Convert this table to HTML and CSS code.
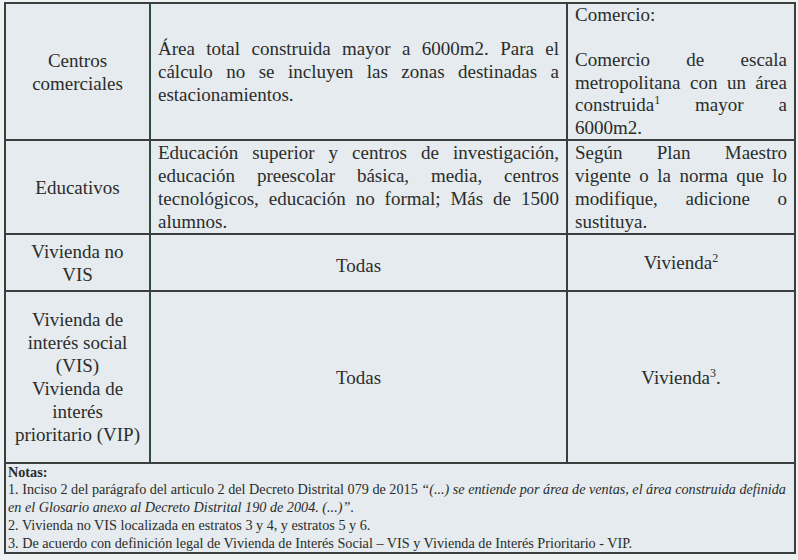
FILE: index.html
```
<!DOCTYPE html>
<html lang="es">
<head>
<meta charset="utf-8">
<title>Tabla</title>
<link rel="stylesheet" href="styles.css">
</head>
<body>
<table class="grid">
  <colgroup>
    <col class="c1">
    <col class="c2">
    <col class="c3">
  </colgroup>
  <tr class="r1">
    <td class="name">Centros<br>comerciales</td>
    <td class="just">Área total construida mayor a 6000m2. Para el cálculo no se incluyen las zonas destinadas a estacionamientos.</td>
    <td class="just top">Comercio:<br><br>Comercio de escala metropolitana con un área construida<sup>1</sup> mayor a 6000m2.</td>
  </tr>
  <tr class="r2">
    <td class="name">Educativos</td>
    <td class="just">Educación superior y centros de investigación, educación preescolar básica, media, centros tecnológicos, educación no formal; Más de 1500 alumnos.</td>
    <td class="just">Según Plan Maestro vigente o la norma que lo modifique, adicione o sustituya.</td>
  </tr>
  <tr class="r3">
    <td class="name">Vivienda no<br>VIS</td>
    <td class="center lower">Todas</td>
    <td class="center">Vivienda<sup>2</sup></td>
  </tr>
  <tr class="r4">
    <td class="name">Vivienda de<br>interés social<br>(VIS)<br>Vivienda de<br>interés<br>prioritario (VIP)</td>
    <td class="center">Todas</td>
    <td class="center">Vivienda<sup>3</sup>.</td>
  </tr>
  <tr class="r5">
    <td class="notes" colspan="3">
      <div class="notes-title">Notas:</div>
      <div>1. Inciso 2 del parágrafo del articulo 2 del Decreto Distrital 079 de 2015 <em>“(...) se entiende por área de ventas, el área construida definida en el Glosario anexo al Decreto Distrital 190 de 2004. (...)”</em>.</div>
      <div>2. Vivienda no VIS localizada en estratos 3 y 4, y estratos 5 y 6.</div>
      <div>3. De acuerdo con definición legal de Vivienda de Interés Social – VIS y Vivienda de Interés Prioritario - VIP.</div>
    </td>
  </tr>
</table>
</body>
</html>
```
FILE: styles.css
```
html, body {
  margin: 0;
  padding: 0;
  background: #eef2f3;
}
body {
  padding: 2px 0 0 4px;
  font-family: "Liberation Serif", "Times New Roman", serif;
  color: #2b2d2c;
}
.grid {
  width: 790px;
  table-layout: fixed;
  border-collapse: collapse;
  background: #e5ebee;
  border: 2px solid #363a38;
}
.c1 { width: 145px; }
.c2 { width: 417px; }
.c3 { width: 228px; }
.grid td {
  font-family: "Liberation Serif", "Times New Roman", serif;
  font-size: 19px;
  line-height: 23px;
  color: #2b2d2c;
  border: 2px solid #3a3e3c;
  padding: 0 7px;
  vertical-align: middle;
}
.grid td.name {
  text-align: center;
  padding: 0 2px;
  border-right-color: #2e4c3c;
}
.grid td.just { text-align: justify; }
.grid td.center { text-align: center; }
.grid td.lower { padding-top: 6px; }
.grid td.top {
  vertical-align: top;
  padding-top: 0;
  line-height: 22.5px;
}
.r1 { height: 134px; }
.r2 { height: 93px; }
.r3 { height: 57px; }
.r4 { height: 172px; }
.r5 { height: 88px; }
sup {
  font-size: 12px;
  line-height: 0;
  vertical-align: 7px;
}
.grid td.notes {
  font-size: 14.2px;
  line-height: 18px;
  padding: 0 3px 0 2px;
  vertical-align: top;
}
.notes-title {
  font-weight: bold;
  line-height: 15px;
  padding-top: 1px;
}
.notes em { font-style: italic; }
```
